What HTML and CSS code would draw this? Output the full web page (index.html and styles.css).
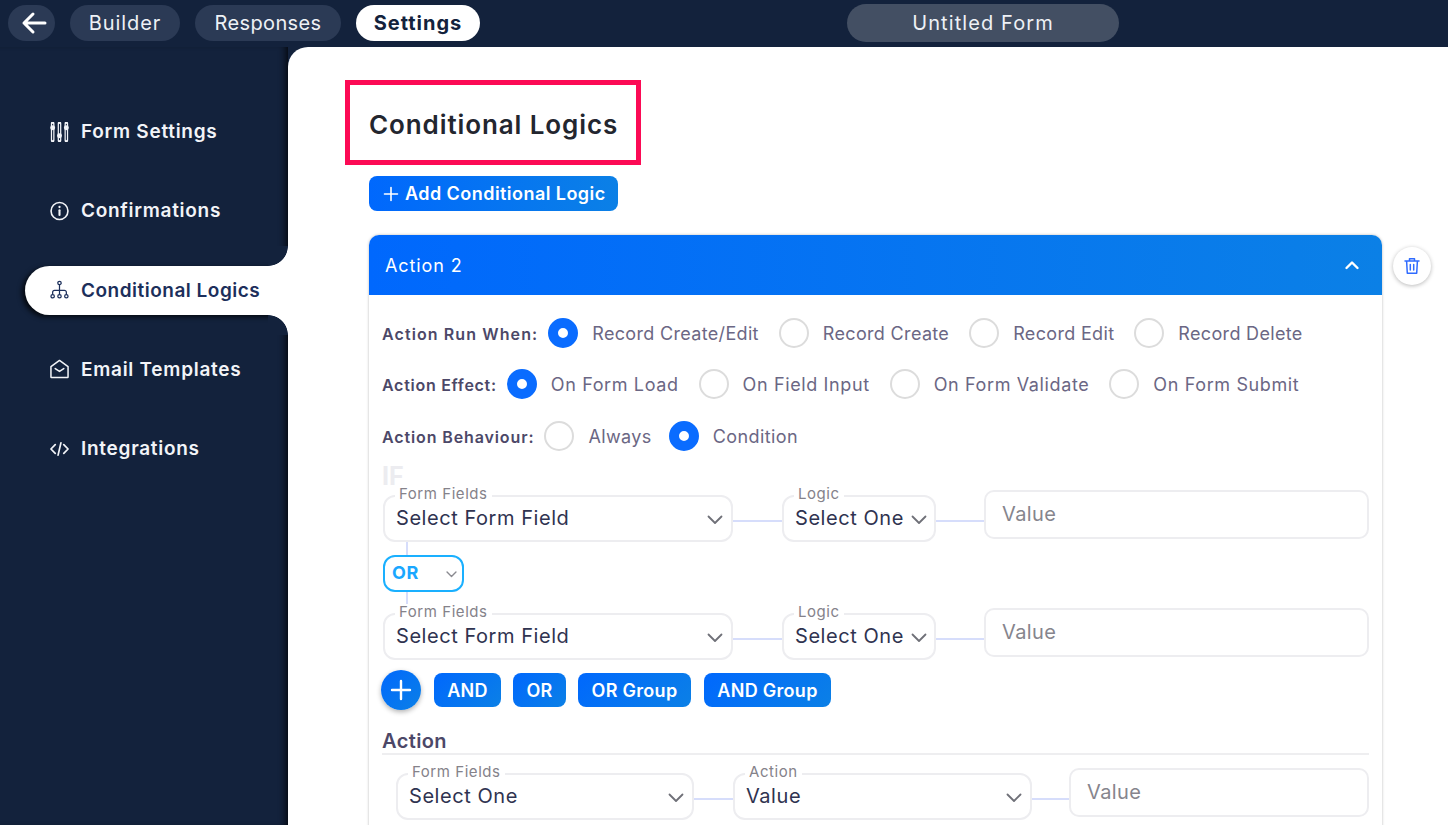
FILE: index.html
```html
<!DOCTYPE html>
<html lang="en">
<head>
<meta charset="utf-8">
<title>Untitled Form - Settings</title>
<link rel="stylesheet" href="styles.css">
</head>
<body>
<header class="topbar">
  <button class="pill pill-back" aria-label="Back">
    <svg width="26" height="24" viewBox="0 0 26 24" fill="none" stroke="#fff" stroke-width="3" stroke-linecap="round" stroke-linejoin="round"><path d="M24 12H3M12 3l-9 9 9 9"/></svg>
  </button>
  <button class="pill pill-builder">Builder</button>
  <button class="pill pill-responses">Responses</button>
  <button class="pill pill-active">Settings</button>
  <div class="form-title">Untitled Form</div>
</header>
<div class="workspace">
  <nav class="sidebar">
    <a class="nav-item">
      <svg class="nav-icon" viewBox="0 0 20 20" fill="none" stroke="currentColor" stroke-width="1.800" stroke-linecap="round"><path d="M2.800 1v18M10 1v18M17.200 1v18" stroke-width="3.800"/><path d="M2.800 2v16M10 2v16M17.200 2v16" stroke="#13223c" stroke-width="1.200"/><circle cx="2.800" cy="5.500" r="2.600" fill="currentColor" stroke="none"/><circle cx="10" cy="14" r="2.600" fill="currentColor" stroke="none"/><circle cx="17.200" cy="5.500" r="2.600" fill="currentColor" stroke="none"/></svg>
      <span>Form Settings</span>
    </a>
    <a class="nav-item">
      <svg class="nav-icon" viewBox="0 0 20 20" fill="none" stroke="currentColor" stroke-width="1.700" stroke-linecap="round"><circle cx="10" cy="10" r="8.900"/><path d="M10 9.200v5" stroke-width="2.200"/><circle cx="10" cy="5.800" r="1.200" fill="currentColor" stroke="none"/></svg>
      <span>Confirmations</span>
    </a>
    <a class="nav-item nav-item-active">
      <svg class="nav-icon" viewBox="0 0 20 20" fill="none" stroke="currentColor" stroke-width="1.300"><circle cx="10" cy="2.600" r="1.800"/><circle cx="2.800" cy="16.600" r="1.800"/><circle cx="10" cy="16.600" r="1.800"/><circle cx="17.200" cy="16.600" r="1.800"/><path d="M10 4.400v10.400M2.800 14.800v-2.400a2 2 0 0 1 2-2h10.400a2 2 0 0 1 2 2v2.400"/></svg>
      <span>Conditional Logics</span>
    </a>
    <a class="nav-item">
      <svg class="nav-icon" viewBox="0 0 20 20" fill="none" stroke="currentColor" stroke-width="1.600" stroke-linejoin="round" stroke-linecap="round"><path d="M1 7.500L10 1l9 6.500v11a.5.5 0 0 1-.5.5h-17a.5.5 0 0 1-.5-.5z"/><path d="M5.500 9.500L10 12.500l4.500-3"/></svg>
      <span>Email Templates</span>
    </a>
    <a class="nav-item">
      <svg class="nav-icon" viewBox="0 0 20 20" fill="none" stroke="currentColor" stroke-width="1.800" stroke-linecap="round" stroke-linejoin="round"><path d="M5.500 5.500L1 10l4.500 4.500M14.500 5.500L19 10l-4.500 4.500M11.500 3.500l-3 13"/></svg>
      <span>Integrations</span>
    </a>
  </nav>
  <main class="content">
    <h1 class="page-title">Conditional Logics</h1>
    <button class="add-btn"><svg width="16" height="16" viewBox="0 0 16 16" stroke="#fff" stroke-width="1.600" stroke-linecap="round"><path d="M8 1.500v13M1.500 8h13"/></svg><span>Add Conditional Logic</span></button>
    <div class="card-row">
      <section class="card">
        <div class="card-head">
          <span>Action 2</span>
          <svg width="16" height="10" viewBox="0 0 16 10" fill="none" stroke="#fff" stroke-width="2.400" stroke-linecap="round" stroke-linejoin="round"><path d="M2.500 8L8 2.500 13.500 8"/></svg>
        </div>
        <div class="card-body">
          <div class="radio-row r1">
            <span class="radio-title">Action Run When:</span>
            <label class="radio-opt"><i class="radio on"></i><span>Record Create/Edit</span></label>
            <label class="radio-opt"><i class="radio"></i><span>Record Create</span></label>
            <label class="radio-opt"><i class="radio"></i><span>Record Edit</span></label>
            <label class="radio-opt"><i class="radio"></i><span>Record Delete</span></label>
          </div>
          <div class="radio-row r2">
            <span class="radio-title">Action Effect:</span>
            <label class="radio-opt"><i class="radio on"></i><span>On Form Load</span></label>
            <label class="radio-opt"><i class="radio"></i><span>On Field Input</span></label>
            <label class="radio-opt"><i class="radio"></i><span>On Form Validate</span></label>
            <label class="radio-opt"><i class="radio"></i><span>On Form Submit</span></label>
          </div>
          <div class="radio-row r3">
            <span class="radio-title">Action Behaviour:</span>
            <label class="radio-opt"><i class="radio"></i><span>Always</span></label>
            <label class="radio-opt"><i class="radio on"></i><span>Condition</span></label>
          </div>
          <div class="if-label">IF</div>
          <div class="cond-row">
            <div class="select w-field"><em class="float">Form Fields</em><span>Select Form Field</span><svg class="chev" viewBox="0 0 16 10"><path d="M1.500 1.500L8 8l6.500-6.500"/></svg></div>
            <i class="link l49"></i>
            <div class="select w-logic"><em class="float">Logic</em><span>Select One</span><svg class="chev" viewBox="0 0 16 10"><path d="M1.500 1.500L8 8l6.500-6.500"/></svg></div>
            <i class="link l48"></i>
            <div class="value-input"><span>Value</span></div>
          </div>
          <div class="or-select"><b>OR</b><svg class="chev chev-small" viewBox="0 0 16 10"><path d="M1.500 1.500L8 8l6.500-6.500"/></svg></div>
          <div class="cond-row">
            <div class="select w-field"><em class="float">Form Fields</em><span>Select Form Field</span><svg class="chev" viewBox="0 0 16 10"><path d="M1.500 1.500L8 8l6.500-6.500"/></svg></div>
            <i class="link l49"></i>
            <div class="select w-logic"><em class="float">Logic</em><span>Select One</span><svg class="chev" viewBox="0 0 16 10"><path d="M1.500 1.500L8 8l6.500-6.500"/></svg></div>
            <i class="link l48"></i>
            <div class="value-input"><span>Value</span></div>
          </div>
          <div class="action-btns">
            <button class="round-add" aria-label="Add"><svg width="22" height="22" viewBox="0 0 22 22" stroke="#fff" stroke-width="2.400" stroke-linecap="round"><path d="M11 2v18M2 11h18"/></svg></button>
            <button class="chip c-and">AND</button>
            <button class="chip c-or">OR</button>
            <button class="chip c-org">OR Group</button>
            <button class="chip c-andg">AND Group</button>
          </div>
          <h2 class="section-title">Action</h2>
          <div class="cond-row action-row">
            <div class="select w-act1"><em class="float">Form Fields</em><span>Select One</span><svg class="chev" viewBox="0 0 16 10"><path d="M1.500 1.500L8 8l6.500-6.500"/></svg></div>
            <i class="link l39"></i>
            <div class="select w-act2"><em class="float">Action</em><span>Value</span><svg class="chev" viewBox="0 0 16 10"><path d="M1.500 1.500L8 8l6.500-6.500"/></svg></div>
            <i class="link l37"></i>
            <div class="value-input"><span>Value</span></div>
          </div>
        </div>
      </section>
      <button class="delete-btn" aria-label="Delete">
        <svg width="16" height="18" viewBox="0 0 16 18" fill="none" stroke="#2f6bff" stroke-width="1.500" stroke-linecap="round" stroke-linejoin="round"><path d="M1 4h14M5.500 4V1.800h5V4M2.600 4l.7 12.200h9.400L13.400 4M6.300 7.500v5.500M9.700 7.500v5.500"/></svg>
      </button>
    </div>
  </main>
</div>
</body>
</html>
```
FILE: styles.css
```css
* { box-sizing: border-box; }
html, body { margin: 0; height: 100%; overflow: hidden; }
body { font-family: Inter, "Open Sans", "Liberation Sans", sans-serif; background: #13223c; color: #13223c; }
button { font-family: inherit; border: 0; cursor: pointer; padding: 0; }

.topbar { height: 47px; display: flex; align-items: flex-start; padding: 5px 0 0 8px; gap: 15px; background: #13223c; }
.pill { height: 36px; border-radius: 18px; background: #2b3a55; color: #eef1f6; font-size: 20px; font-weight: 400; letter-spacing: .35px; }
.pill-back { width: 47px; display: flex; align-items: center; justify-content: center; padding-left: 4px; }
.pill-builder { width: 110px; letter-spacing: .9px; }
.pill-responses { width: 146px; }
.pill-active { width: 124px; background: #fff; color: #13223c; font-weight: 700; letter-spacing: 1px; }
.form-title { width: 272px; height: 38px; margin: -1px 0 0 352px; border-radius: 19px; background: #434f63; color: #eef1f6; font-size: 20px; letter-spacing: 1.1px; display: flex; align-items: center; justify-content: center; }

.workspace { display: flex; height: 778px; }
.sidebar { width: 288px; flex: none; padding: 60px 0 0 25px; display: flex; flex-direction: column; gap: 30px; background: #13223c; box-shadow: inset -7px 0 8px -6px #000; overflow: hidden; }
.nav-item { height: 49.25px; flex: none; display: flex; align-items: center; gap: 12px; padding-left: 25px; color: #f2f4f8; font-size: 19px; font-weight: 600; letter-spacing: .72px; position: relative; }
.nav-icon { width: 19px; height: 20px; flex: none; }
.nav-item-active { background: #fff; color: #1c2f5b; border-radius: 25px 0 0 25px; letter-spacing: .5px; box-shadow: -3px 2px 5px rgba(0, 0, 0, .75); }
.nav-item-active::before, .nav-item-active::after { content: ""; position: absolute; right: 0; width: 20px; height: 20px; }
.nav-item-active::before { top: -20px; background: radial-gradient(circle at 0 0, #13223c 19.5px, #fff 20.2px); }
.nav-item-active::after { bottom: -20px; background: radial-gradient(circle at 0 100%, #13223c 19.500px, #fff 20.2px); }

.content { flex: 1; min-width: 0; background: #fff; border-radius: 20px 0 0 0; padding: 33px 0 0 81px; overflow: hidden; }
.page-title { margin: 0 0 11px -24px; width: 296px; height: 85px; border: 5px solid #fc0a55; padding: 3px 0 0 19px; display: flex; align-items: center; font-size: 26px; font-weight: 600; letter-spacing: .9px; color: #23262f; }
.add-btn { width: 249px; height: 35px; border-radius: 8px; background: linear-gradient(90deg, #0068fd, #0b80e6); color: #fff; font-size: 18px; font-weight: 600; letter-spacing: .45px; display: flex; align-items: center; gap: 6px; padding-left: 14px; }

.card-row { display: flex; align-items: flex-start; gap: 11px; margin-top: 24px; }
.card { width: 1013px; flex: none; border-radius: 10px 10px 0 0; box-shadow: 0 0 3px rgba(0, 0, 0, .28); }
.card-head { height: 60px; display: flex; align-items: center; justify-content: space-between; padding: 0 22px 0 16px; background: linear-gradient(90deg, #0068fd, #0b80e6); border-radius: 10px 10px 0 0; color: #fff; font-size: 18px; letter-spacing: .9px; }
.card-body { padding: 23px 13px 40px 13px; height: 600px; }

.radio-row { display: flex; align-items: center; height: 30px; }
.r2 { margin-top: 21px; }
.r3 { margin-top: 22px; }
.radio-title { font-size: 16px; font-weight: 600; color: #4c4868; margin: 2px 10px 0 0; white-space: nowrap; }
.r1 .radio-title { letter-spacing: 1.1px; }
.r2 .radio-title { letter-spacing: .72px; }
.r3 .radio-title { letter-spacing: .88px; }
.radio-opt { display: flex; align-items: center; gap: 14px; margin-right: 20px; font-size: 18px; color: #6b6784; letter-spacing: .33px; white-space: nowrap; }
.r2 .radio-opt { letter-spacing: .62px; }
.r3 .radio-opt { letter-spacing: .4px; margin-right: 17px; }
.radio { width: 30px; height: 30px; flex: none; border-radius: 50%; border: 2px solid #dcdcdc; background: #fff; }
.radio.on { border: 10px solid #0a6cff; }

.if-label { height: 26px; margin-top: 13px; font-size: 25px; line-height: 25px; font-weight: 700; color: #ececf0; }
.cond-row { display: flex; align-items: flex-start; margin-left: 1px; }
.select { height: 47px; margin-top: 5px; border: 2px solid #ededf0; border-radius: 12px; display: flex; align-items: center; justify-content: space-between; padding: 0 8px 2px 11px; position: relative; font-size: 20px; color: #2f3350; flex: none; letter-spacing: .55px; }
.float { position: absolute; left: 10px; top: -11px; background: #fff; padding: 0 4px; font-size: 15px; font-style: normal; line-height: 16px; color: #85828a; letter-spacing: .55px; }
.w-field { width: 350px; }
.w-logic { width: 154px; padding-right: 7px; }
.w-act1 { width: 298px; }
.w-act2 { width: 299px; }
.chev { width: 16px; height: 10px; margin-top: 4px; fill: none; stroke: #6f7078; stroke-width: 1.800; stroke-linecap: round; stroke-linejoin: round; flex: none; }
.chev-small { width: 11px; height: 7px; stroke-width: 2; stroke: #8a8a90; }
.link { height: 2px; margin-top: 30px; flex: none; background: #d6ddfb; }
.l49 { width: 49px; }
.l48 { width: 48px; }
.l39 { width: 39px; }
.l37 { width: 37px; }
.value-input { flex: 1; height: 49px; border: 2px solid #ededf0; border-radius: 10px; display: flex; align-items: center; padding: 0 0 2px 16px; font-size: 20px; color: #86858d; letter-spacing: .4px; }

.or-select { width: 81px; height: 37px; margin: 13px 0 16px 1px; border: 2px solid #1ab0ff; border-radius: 12px; display: flex; align-items: center; justify-content: space-between; padding: 0 5px 2px 7px; position: relative; font-size: 18px; color: #1aa7ff; letter-spacing: .6px; }
.or-select::before, .or-select::after { content: ""; position: absolute; left: 21px; width: 2px; background: #d6ddfb; }
.or-select::before { top: -15px; height: 13px; }
.or-select::after { bottom: -21px; height: 19px; }

.action-btns { display: flex; align-items: center; gap: 12px; margin: 10px 0 0 -1px; height: 40px; }
.round-add { width: 40px; height: 40px; margin-right: 1px; border-radius: 50%; background: linear-gradient(135deg, #0068fd, #0b80e6); box-shadow: 0 2px 5px rgba(0, 0, 0, .3); display: flex; align-items: center; justify-content: center; }
.chip { height: 34px; border-radius: 8px; background: linear-gradient(135deg, #0068fd, #0b80e6); color: #fff; font-size: 18px; font-weight: 600; letter-spacing: .3px; }
.c-and { width: 67px; }
.c-or { width: 53px; }
.c-org { width: 113px; }
.c-andg { width: 127px; margin-left: 1px; }

.section-title { margin: 20px 0 0; height: 25px; border-bottom: 2px solid #eeeef0; font-size: 20px; line-height: 22px; font-weight: 600; color: #4c4868; letter-spacing: .4px; }
.action-row { margin: 13px 0 0 14px; }
.delete-btn { width: 38px; height: 38px; margin-top: 12px; border-radius: 50%; background: #fff; box-shadow: 0 1px 4px rgba(0, 0, 0, .28); display: flex; align-items: center; justify-content: center; }
```
